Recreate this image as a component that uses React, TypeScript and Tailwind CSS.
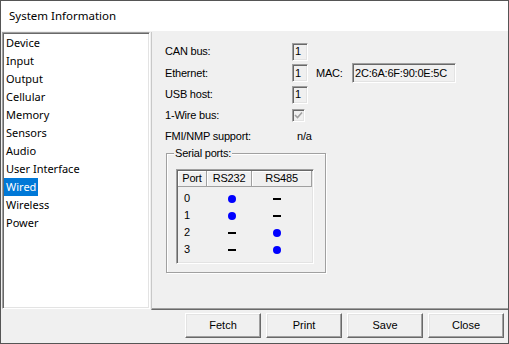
import React from "react";

const items = [
  "Device",
  "Input",
  "Output",
  "Cellular",
  "Memory",
  "Sensors",
  "Audio",
  "User Interface",
  "Wired",
  "Wireless",
  "Power",
];

const sunken =
  "border border-t-[#a0a0a0] border-l-[#a0a0a0] border-r-white border-b-white shadow-[inset_1px_1px_0_#696969,inset_-1px_-1px_0_#e3e3e3]";

function Box({ value, w = "w-[16px]", h = "h-[18px]" }: { value: string; w?: string; h?: string }) {
  return (
    <div className={`${w} ${h} ${sunken} bg-[#f0f0f0] flex items-center pl-[2px] text-[11px] leading-none`}>
      {value}
    </div>
  );
}

function Dot() {
  return <div className="ml-[21px] w-[8px] h-[8px] rounded-full bg-[#0000ff]" />;
}
function Dash() {
  return <div className="ml-[21px] w-[8px] h-[2px] bg-black" />;
}

export default function App() {
  const ports: [string, boolean][] = [
    ["0", true],
    ["1", true],
    ["2", false],
    ["3", false],
  ];
  return (
    <div
      className="w-[509px] h-[344px] border border-[#555555] bg-[#f0f0f0] flex flex-col overflow-hidden text-black"
      style={{ fontFamily: "'Liberation Sans', Arial, sans-serif" }}
    >
      <div
        className="h-[30px] bg-white flex items-center pl-[8px] text-[11.5px]"
        style={{ fontFamily: "'Noto Sans', sans-serif" }}
      >
        System Information
      </div>
      <div className="flex h-[279px]">
        <div
          className={`ml-[1px] mt-[1px] w-[148px] h-[277px] bg-white ${sunken} pt-[1px] pl-[1px] text-[11px]`}
          style={{ fontFamily: "'Noto Sans', sans-serif" }}
        >
          {items.map((it) => (
            <div key={it} className="h-[18px] flex">
              <span
                className={`px-[2px] h-[18px] leading-[18px] ${
                  it === "Wired" ? "bg-[#0078d7] text-white" : ""
                }`}
              >
                {it}
              </span>
            </div>
          ))}
        </div>
        <div className="ml-[1px] mt-[1px] flex-1 h-[278px] border-l border-l-[#c8c8c8] border-b border-b-[#696969] shadow-[inset_0_-1px_0_#a0a0a0] pl-[13px] pt-[9px] text-[11px] tracking-[-0.2px]">
          <div className="h-[21px] flex items-center">
            <div className="w-[127px]">CAN bus:</div>
            <Box value="1" />
          </div>
          <div className="h-[22px] flex items-center">
            <div className="w-[127px]">Ethernet:</div>
            <Box value="1" />
            <div className="ml-[8px] w-[36px]">MAC:</div>
            <Box value="2C:6A:6F:90:0E:5C" w="w-[104px]" h="h-[20px]" />
          </div>
          <div className="h-[21px] flex items-center">
            <div className="w-[127px]">USB host:</div>
            <Box value="1" />
          </div>
          <div className="h-[21px] flex items-center">
            <div className="w-[127px]">1-Wire bus:</div>
            <div className={`w-[13px] h-[13px] ${sunken} bg-[#f0f0f0] flex items-center justify-center`}>
              <svg width="9" height="9" viewBox="0 0 9 9">
                <path d="M1 4 L3.5 6.5 L8 1.5" stroke="#a0a0a0" strokeWidth="1.6" fill="none" />
              </svg>
            </div>
          </div>
          <div className="h-[21px] flex items-center">
            <div className="w-[127px]">FMI/NMP support:</div>
            <div className="ml-[5px]">n/a</div>
          </div>
          <div className="relative ml-[1px] mt-[6px] w-[160px] h-[120px] border border-[#a0a0a0] shadow-[inset_1px_1px_0_white,1px_1px_0_white]">
            <div className="absolute left-[7px] top-[-8px] px-[1px] bg-[#f0f0f0] leading-[14px]">
              Serial ports:
            </div>
            <div className={`ml-[9px] mt-[15px] w-[138px] h-[95px] bg-[#f0f0f0] ${sunken} p-[1px]`}>
              <div className="flex h-[16px] border-b border-b-[#a0a0a0]">
                <div className="w-[29px] text-center border-r border-r-[#a0a0a0] shadow-[inset_1px_1px_0_white] leading-[15px]">
                  Port
                </div>
                <div className="w-[45px] text-center border-r border-r-[#a0a0a0] shadow-[inset_1px_1px_0_white] leading-[15px]">
                  RS232
                </div>
                <div className="flex-1 text-center border-r border-r-[#a0a0a0] shadow-[inset_1px_1px_0_white] leading-[15px]">
                  RS485
                </div>
              </div>
              <div className="pt-[3px]">
                {ports.map(([p, rs232]) => (
                  <div key={p} className="flex h-[17px] items-center">
                    <div className="w-[29px] pl-[6px]">{p}</div>
                    <div className="w-[45px] flex items-center">{rs232 ? <Dot /> : <Dash />}</div>
                    <div className="flex-1 flex items-center">{rs232 ? <Dash /> : <Dot />}</div>
                  </div>
                ))}
              </div>
            </div>
          </div>
        </div>
      </div>
      <div className="flex justify-end gap-[5px] pr-[4px] pt-[3px]">
        {["Fetch", "Print", "Save", "Close"].map((b) => (
          <div
            key={b}
            className="w-[76px] h-[25px] bg-[#f0f0f0] border border-t-white border-l-white border-r-[#696969] border-b-[#696969] shadow-[inset_-1px_-1px_0_#a0a0a0,inset_1px_1px_0_#e3e3e3] flex items-center justify-center text-[11px]"
          >
            {b}
          </div>
        ))}
      </div>
    </div>
  );
}
